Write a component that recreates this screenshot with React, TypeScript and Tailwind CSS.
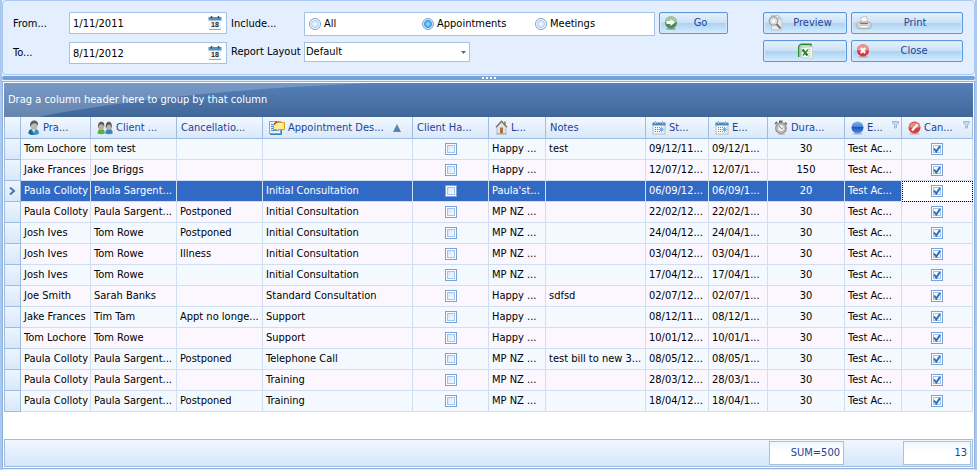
import React, { useState } from 'react';

interface Appointment {
  practitioner: string;
  client: string;
  reason: string;
  description: string;
  location: string;
  notes: string;
  start: string;
  end: string;
  duration: number;
}

const appointments: Appointment[] = [
  { practitioner: 'Tom Lochore', client: 'tom test', reason: '', description: '', location: 'Happy ...', notes: 'test', start: '09/12/11...', end: '09/12/1...', duration: 30 },
  { practitioner: 'Jake Frances', client: 'Joe Briggs', reason: '', description: '', location: 'Happy ...', notes: '', start: '12/07/12...', end: '12/07/1...', duration: 150 },
  { practitioner: 'Paula Colloty', client: 'Paula Sargent...', reason: '', description: 'Initial Consultation', location: "Paula'st...", notes: '', start: '06/09/12...', end: '06/09/1...', duration: 20 },
  { practitioner: 'Paula Colloty', client: 'Paula Sargent...', reason: 'Postponed', description: 'Initial Consultation', location: 'MP NZ ...', notes: '', start: '22/02/12...', end: '22/02/1...', duration: 30 },
  { practitioner: 'Josh Ives', client: 'Tom Rowe', reason: 'Postponed', description: 'Initial Consultation', location: 'MP NZ ...', notes: '', start: '24/04/12...', end: '24/04/1...', duration: 30 },
  { practitioner: 'Josh Ives', client: 'Tom Rowe', reason: 'Illness', description: 'Initial Consultation', location: 'MP NZ ...', notes: '', start: '03/04/12...', end: '03/04/1...', duration: 30 },
  { practitioner: 'Josh Ives', client: 'Tom Rowe', reason: '', description: 'Initial Consultation', location: 'MP NZ ...', notes: '', start: '17/04/12...', end: '17/04/1...', duration: 30 },
  { practitioner: 'Joe Smith', client: 'Sarah Banks', reason: '', description: 'Standard Consultation', location: 'Happy ...', notes: 'sdfsd', start: '02/07/12...', end: '02/07/1...', duration: 30 },
  { practitioner: 'Jake Frances', client: 'Tim Tam', reason: 'Appt no longe...', description: 'Support', location: 'Happy ...', notes: '', start: '08/12/11...', end: '08/12/1...', duration: 30 },
  { practitioner: 'Tom Lochore', client: 'Tom Rowe', reason: '', description: 'Support', location: 'Happy ...', notes: '', start: '10/01/12...', end: '10/01/1...', duration: 30 },
  { practitioner: 'Paula Colloty', client: 'Paula Sargent...', reason: 'Postponed', description: 'Telephone Call', location: 'MP NZ ...', notes: 'test bill to new 3...', start: '08/05/12...', end: '08/05/1...', duration: 30 },
  { practitioner: 'Paula Colloty', client: 'Paula Sargent...', reason: '', description: 'Training', location: 'MP NZ ...', notes: '', start: '28/03/12...', end: '28/03/1...', duration: 30 },
  { practitioner: 'Paula Colloty', client: 'Paula Sargent...', reason: 'Postponed', description: 'Training', location: 'MP NZ ...', notes: '', start: '18/04/12...', end: '18/04/1...', duration: 30 },
];

const PersonIcon = () => (
  <svg width="13" height="16" viewBox="0 0 13 16" className="shrink-0">
    <path d="M1.500 13.500C1.500 10.500 3 9.500 5 9h3.500c2.500.5 3.700 2 3.500 4.500C9 15.500 4 15.500 1.500 13.500z" fill="#3a95c4" />
    <path d="M1.500 13.500C1.500 11 2.500 10 4 9.300l2.500 5.500c-2 0-4-.5-5-1.300z" fill="#1f6391" />
    <path d="M4.500 9h4L7 12.500z" fill="#dcebf2" />
    <ellipse cx="7" cy="5.500" rx="3.500" ry="4.300" fill="#b9b9b7" />
    <path d="M3.500 7C2.300 3 4.300.5 7.200.5c2.800 0 4.500 2.200 3.500 5.500C10 4 9 3.500 7.700 3.200 6 3 4.300 4 3.500 7z" fill="#5c5d60" />
  </svg>
);

const PeopleIcon = () => (
  <svg width="16" height="14" viewBox="0 0 16 14" className="shrink-0">
    <path d="M.5 12.500c0-2.500 1-4 2.500-4.500h2.500c1.600.5 2.500 2 2.300 4.500-2 1-5.500 1-7.300 0z" fill="#5ab045" />
    <path d="M8.300 12.500c0-2.500 1-4 2.500-4.500h2.500c1.600.5 2.500 2 2.300 4.500-2 1-5.500 1-7.300 0z" fill="#3389b8" />
    <ellipse cx="4.200" cy="5.200" rx="2.800" ry="3.800" fill="#b9b0a4" />
    <ellipse cx="11.800" cy="5.200" rx="2.800" ry="3.800" fill="#b9b0a4" />
    <path d="M1.300 8C.5 3 2 .8 4.200.8 6.500.8 7.800 2.500 7.200 6 6.600 4 5.600 3.300 4 3.300S1.800 5 1.300 8z" fill="#57585a" />
    <path d="M8.900 8C8.200 3 9.600.8 11.800.8c2.300 0 3.600 2.200 2.900 7.200-.4-3-1.200-4.500-2.700-4.500S9.400 5 8.900 8z" fill="#57585a" />
  </svg>
);

const NoteIcon = () => (
  <svg width="16" height="16" viewBox="0 0 16 16" className="shrink-0">
    <rect x=".5" y="1.500" width="11" height="12" fill="#e8f2fc" stroke="#7ba8dc" />
    <path d="M12.500 8v6.500H1" fill="none" stroke="#4478b8" />
    <path d="M2 4.500h2M2 6.500h2M2 8.500h2M2 10.500h8" stroke="#4d8ad0" />
    <path d="M5 4.500L7 2.500h8.500V9.500H9.500L8 11 7.500 9.500H4.500V5z" fill="#ffec94" stroke="#d3a21c" />
    <path d="M5 4.500L8 1.500" stroke="#b8352b" strokeWidth="1.500" />
  </svg>
);

const HouseIcon = () => (
  <svg width="13" height="15" viewBox="0 0 13 15" className="shrink-0">
    <path d="M9 1.500h1.700V5H9z" fill="#8d8178" />
    <path d="M2 6.500l4.500-5 4.500 5v7H2z" fill="#e6e4e1" stroke="#b3afaa" strokeWidth=".7" />
    <path d="M1 7.200L6.500 1.200 12 7.200" fill="none" stroke="#79736d" strokeWidth="1.400" />
    <path d="M5 7.500h3v6H5z" fill="#a3714e" />
    <path d="M1 14h11" stroke="#a9a9a4" />
  </svg>
);

const DatesIcon = () => (
  <svg width="14" height="14" viewBox="0 0 14 14" className="shrink-0">
    <rect x="1" y="2.500" width="12" height="10.500" fill="#f8f9fb" stroke="#b7bec6" />
    <path d="M.5 1.500h13V4.500H.5z" fill="#4a8cc8" />
    <path d="M3.500 0v3M10.500 0v3" stroke="#9fb9cc" />
    <path d="M3 6.500h5M3 8.500h4M3 10.500h5" stroke="#b06a6a" strokeDasharray="1 1" />
    <path d="M9.500 5.500v6M6.500 8.500h6M7.500 6.500l4 4M11.500 6.500l-4 4" stroke="#66aee8" strokeWidth=".9" />
  </svg>
);

const StopwatchIcon = () => (
  <svg width="14" height="15" viewBox="0 0 14 15" className="shrink-0">
    <path d="M5 .5h3.500v2.500H5z" fill="#6b6b6b" />
    <path d="M1 4l2.200-2M12.800 4.500L10.800 2.500" stroke="#7a7a7a" strokeWidth="1.800" />
    <circle cx="7" cy="8.200" r="5.300" fill="#c9cac9" stroke="#8c8e8f" strokeWidth="1.200" />
    <circle cx="7" cy="8.200" r="3.600" fill="#f1f1ec" stroke="#a9aaa8" strokeWidth=".8" />
    <path d="M5 6l2.200 2.500L9 8" fill="none" stroke="#5c7f6e" strokeWidth=".9" />
    <path d="M4 14.300h7" stroke="#a8adb3" strokeWidth=".8" />
  </svg>
);

const BallIcon = () => (
  <svg width="13" height="14" viewBox="0 0 13 14" className="shrink-0">
    <defs>
      <linearGradient id="ball" x1="0" y1="0" x2="0" y2="1">
        <stop offset="0" stopColor="#8ab4ee" />
        <stop offset=".45" stopColor="#4a82d8" />
        <stop offset=".5" stopColor="#1c55bb" />
        <stop offset="1" stopColor="#4f95e8" />
      </linearGradient>
    </defs>
    <ellipse cx="6.500" cy="12.700" rx="5" ry="1" fill="#b3bfd0" />
    <circle cx="6.500" cy="6.500" r="6" fill="url(#ball)" />
  </svg>
);

const CancelIcon = () => (
  <svg width="13" height="14" viewBox="0 0 13 14" className="shrink-0">
    <ellipse cx="6.500" cy="12.700" rx="5" ry="1" fill="#cdb8bc" />
    <circle cx="6.500" cy="6.500" r="6" fill="#d8403f" />
    <path d="M.7 6a6 6 0 0 1 11.600 0C8.500 7.500 4.500 7.500.7 6z" fill="#ea8883" />
    <path d="M4 9.500L9.500 3.500" stroke="#fff" strokeWidth="2.200" />
  </svg>
);

const FunnelIcon = () => (
  <svg width="7" height="8" viewBox="0 0 7 8" className="mt-1 ml-auto shrink-0 self-start">
    <path d="M.5.500h6v1.500L4.500 4v3h-2V4L.5 2z" fill="#c5daf4" stroke="#9bb9e0" />
  </svg>
);

const CalendarIcon = () => (
  <svg width="14" height="14" viewBox="0 0 14 14">
    <path d="M.5 2h13v11H.5z" fill="#f3f3f3" />
    <path d="M1 13.500h12" stroke="#a5a5a5" />
    <path d="M.5 1h13v3.500H.5z" fill="#5b93bd" />
    <path d="M3.500 0v2.500M10.500 0v2.500" stroke="#2c526e" strokeWidth="1.500" />
    <text x="7" y="11" textAnchor="middle" fontSize="7" fontWeight="bold" fontFamily="Liberation Sans, sans-serif" fill="#222">18</text>
  </svg>
);

const GoIcon = () => (
  <svg width="14" height="14" viewBox="0 0 14 14">
    <ellipse cx="7" cy="12.700" rx="5" ry="1" fill="#8ba792" />
    <circle cx="7" cy="6.500" r="6" fill="#4b8a50" />
    <path d="M1 6a6 6 0 0 1 12 0C9 7.500 5 7.500 1 6z" fill="#a3c4a4" />
    <path d="M2.500 5h4V3l4.500 3.500L6.500 10V8h-4z" fill="#fff" />
  </svg>
);

const PreviewIcon = () => (
  <svg width="15" height="16" viewBox="0 0 15 16">
    <path d="M3.500.500h7l3.500 3.500v11H3.500z" fill="#e9ebed" stroke="#bfc3c7" />
    <path d="M10.500.500v3.500H14" fill="#d0d4d8" stroke="#bfc3c7" />
    <circle cx="5.500" cy="6" r="4.200" fill="#e3e9ed" stroke="#a3a6aa" strokeWidth="1.400" />
    <circle cx="5.500" cy="6" r="2.700" fill="#f3f6f8" stroke="#c3c7ca" strokeWidth=".7" />
    <path d="M8.500 9l4 4.500" stroke="#75787c" strokeWidth="2" />
  </svg>
);

const PrinterIcon = () => (
  <svg width="16" height="14" viewBox="0 0 16 14">
    <path d="M4.500 1.500l6-1 1 5.500h-6z" fill="#fafafa" stroke="#c3c3c3" />
    <path d="M1 7.500L3 6h10l2 1.500V11l-1 1.500H2L1 11z" fill="#dcdcdc" stroke="#a0a0a0" strokeWidth=".8" />
    <path d="M4 7.500h8" stroke="#777" strokeWidth="1.200" />
    <path d="M3.500 9.500h9v2.500h-9z" fill="#f9f9f9" stroke="#b0b0b0" strokeWidth=".6" />
  </svg>
);

const ExcelIcon = () => (
  <svg width="16" height="16" viewBox="0 0 16 16">
    <path d="M1.700 14V4.500C1.700 2.700 3 1.200 5 1.200h9v2" fill="none" stroke="#2f8a34" strokeWidth="1.400" />
    <path d="M3.200 13.500V5C3.200 3.700 4 2.800 5.500 2.800H13" fill="none" stroke="#9ccb9c" />
    <path d="M4.500 4.500l11-.5v11.500L4.500 14z" fill="#fbfdfb" stroke="#b9c7b9" strokeWidth=".7" />
    <path d="M12.500 5.500v8.500" stroke="#c9dfc9" strokeWidth="3" />
    <path d="M11 7.500h4M11 9.500h4M11 11.500h4" stroke="#fff" strokeWidth=".8" />
    <path d="M5.500 6.500l5 6" stroke="#217a26" strokeWidth="2.200" />
    <path d="M11 6.500l-5 6" stroke="#2f8a34" strokeWidth="1.400" />
  </svg>
);

const CloseIcon = () => (
  <svg width="14" height="14" viewBox="0 0 14 14">
    <ellipse cx="7" cy="12.700" rx="5" ry="1" fill="#c9a9b0" />
    <circle cx="7" cy="6.500" r="6" fill="#d4383c" />
    <path d="M1 6a6 6 0 0 1 12 0C9 7.500 5 7.500 1 6z" fill="#ea9393" />
    <path d="M4.800 4l4.400 5M9.200 4L4.800 9" stroke="#fff" strokeWidth="2.200" />
  </svg>
);

const columns = [
  { label: 'Pra...', icon: <PersonIcon /> },
  { label: 'Client ...', icon: <PeopleIcon /> },
  { label: 'Cancellatio...' },
  { label: 'Appointment Des...', icon: <NoteIcon />, sorted: true },
  { label: 'Client Ha...' },
  { label: 'L...', icon: <HouseIcon /> },
  { label: 'Notes' },
  { label: 'St...', icon: <DatesIcon /> },
  { label: 'E...', icon: <DatesIcon /> },
  { label: 'Dura...', icon: <StopwatchIcon /> },
  { label: 'E...', icon: <BallIcon />, filtered: true },
  { label: 'Can...', icon: <CancelIcon />, filtered: true },
];

function DateField({ id, value }: { id: string; value: string }) {
  return (
    <div className="flex h-[22px] w-[158px] items-center border border-[#a6c1e4] bg-white pr-1">
      <input id={id} type="text" defaultValue={value} className="h-full min-w-0 flex-1 px-[3px] outline-none" />
      <button type="button" aria-label="Open calendar">
        <CalendarIcon />
      </button>
    </div>
  );
}

function Radio({ label, checked, onSelect }: { label: string; checked: boolean; onSelect: () => void }) {
  return (
    <label className="flex items-center gap-[3px]">
      <input
        type="radio"
        name="include"
        checked={checked}
        onChange={onSelect}
        className="size-3 appearance-none rounded-full border border-[#7ba3d6] bg-[radial-gradient(circle,#f2f8ff_0%,#dbe9fb_35%,#a9c8ef_48%,#f4f9ff_60%)] checked:bg-[radial-gradient(circle,#a5e8ff_0%,#4fb4f0_35%,#3a8fd6_48%,#cfe6fc_62%)]"
      />
      {label}
    </label>
  );
}

function Check({ checked, label }: { checked?: boolean; label: string }) {
  return (
    <label className="mx-auto grid size-3">
      <input
        type="checkbox"
        aria-label={label}
        defaultChecked={checked}
        className="peer col-start-1 row-start-1 size-3 appearance-none border border-[#76a3dc] bg-linear-to-br from-[#cfe0f6] to-white shadow-[inset_0_0_0_1px_#fff,inset_0_0_0_2px_#a5c3e8] checked:from-white checked:to-[#e8f1fc]"
      />
      <svg viewBox="0 0 12 12" className="pointer-events-none col-start-1 row-start-1 hidden size-3 peer-checked:block">
        <path d="M3 5.500l2.300 3L9 3" fill="none" stroke="#2f6fb8" strokeWidth="2" />
      </svg>
    </label>
  );
}

function ToolButton({ icon, label, name }: { icon: React.ReactNode; label?: string; name?: string }) {
  return (
    <button
      type="button"
      aria-label={name}
      className="flex h-[22px] w-full items-center rounded-xs border border-[#5c97de] bg-[linear-gradient(#e6f1fd,#cbe1f6_50%,#acd1f3_50%,#d0edff)] px-1 text-[#1c4494] shadow-[inset_0_0_0_1px_#d5e8fb]"
    >
      {label ? icon : <span className="mx-auto">{icon}</span>}
      {label && <span className="flex-1 text-center">{label}</span>}
    </button>
  );
}

export default function App() {
  const [include, setInclude] = useState('Appointments');
  const [selected, setSelected] = useState(2);

  const total = appointments.reduce((sum, a) => sum + a.duration, 0);

  return (
    <div className="border-x-2 border-[#a9c7ef] bg-[#e3eeff] font-['DejaVu_Sans_Condensed','DejaVu_Sans',sans-serif] text-[11px] leading-4 text-black">
      <form className="flex h-[75px] items-start rounded-sm border border-[#a9c8f3] pt-[11px] pr-[11px] pl-2.5">
        <div className="grid grid-cols-[56px_158px_77px_auto] gap-y-1.5">
          <label htmlFor="from" className="self-center">From...</label>
          <DateField id="from" value="1/11/2011" />
          <span id="include-label" className="self-center pl-1">Include...</span>
          <div className="flex items-start gap-1">
            <div role="radiogroup" aria-labelledby="include-label" className="grid h-6 w-[351px] grid-cols-3 items-center border border-[#a6c1e4] bg-white pr-1.5 pl-1">
              {['All', 'Appointments', 'Meetings'].map((option) => (
                <Radio key={option} label={option} checked={include === option} onSelect={() => setInclude(option)} />
              ))}
            </div>
            <div className="w-[69px]">
              <ToolButton icon={<GoIcon />} label="Go" />
            </div>
          </div>

          <label htmlFor="to" className="self-center">To...</label>
          <DateField id="to" value="8/11/2012" />
          <label htmlFor="layout" className="pt-0.5 pl-1 whitespace-nowrap">Report Layout</label>
          <div className="grid w-[166px] items-center self-start">
            <select id="layout" className="col-start-1 row-start-1 h-5 appearance-none border border-[#a6c1e4] bg-white px-px">
              <option>Default</option>
            </select>
            <svg width="5" height="3" viewBox="0 0 5 3" className="pointer-events-none col-start-1 row-start-1 mr-1 justify-self-end">
              <path d="M0 0h5L2.500 3z" fill="#3b6fb0" />
            </svg>
          </div>
        </div>

        <div className="ml-auto grid grid-cols-[84px_112px] gap-x-1 gap-y-1.5">
          <ToolButton icon={<PreviewIcon />} label="Preview" />
          <ToolButton icon={<PrinterIcon />} label="Print" />
          <ToolButton icon={<ExcelIcon />} name="Export to Excel" />
          <ToolButton icon={<CloseIcon />} label="Close" />
        </div>
      </form>

      <div className="my-px flex h-1 items-center justify-center gap-0.5 rounded-xs bg-[#75a1db]">
        <i className="size-0.5 bg-white" />
        <i className="size-0.5 bg-white" />
        <i className="size-0.5 bg-white" />
        <i className="size-0.5 bg-white" />
      </div>

      <div className="border border-[#8fb0dc] bg-white p-px">
        <div className="relative flex h-[34px] items-center overflow-hidden bg-linear-to-b from-[#5580b8] to-[#416799] px-1 text-white">
          <svg viewBox="0 0 400 34" preserveAspectRatio="none" className="absolute inset-y-0 left-0 h-full w-[400px]">
            <path d="M0 0h370C260 4 130 15 35 34H0z" fill="#fff" fillOpacity=".2" />
          </svg>
          <span className="relative">Drag a column header here to group by that column</span>
        </div>

        <table className="w-full table-fixed border-separate border-spacing-0">
          <colgroup>
            <col className="w-[17px]" />
            <col className="w-[70px]" />
            <col className="w-[86px]" />
            <col className="w-[86px]" />
            <col className="w-[150px]" />
            <col className="w-[76px]" />
            <col className="w-[57px]" />
            <col className="w-[100px]" />
            <col className="w-[63px]" />
            <col className="w-[59px]" />
            <col className="w-[77px]" />
            <col className="w-[57px]" />
            <col className="w-[71px]" />
          </colgroup>
          <thead className="text-[#1c4494]">
            <tr className="h-[22px] bg-linear-to-b from-[#f2f8ff] to-[#d8e8fa]">
              <th className="border-x border-b border-[#9ebce0]" aria-label="Row" />
              {columns.map((col, i) => (
                <th key={i} className="border-r border-b border-[#9ebce0] p-0 font-normal whitespace-nowrap">
                  <div className={`flex h-[21px] items-center ${col.icon ? 'gap-[3px] pr-0.5 pl-1.5' : 'px-1'}`}>
                    {col.icon}
                    <span>{col.label}</span>
                    {col.sorted && (
                      <svg width="8" height="8" viewBox="0 0 8 8" className="ml-1.5">
                        <path d="M4 0l4 8H0z" fill="#5c82b5" />
                      </svg>
                    )}
                    {col.filtered && <FunnelIcon />}
                  </div>
                </th>
              ))}
            </tr>
          </thead>
          <tbody className="[&_td]:border-r [&_td]:border-b [&_td]:border-[#cfdff0] [&_td]:px-[3px] [&_td]:py-0 [&_td]:whitespace-nowrap">
            {appointments.map((a, i) => (
              <tr
                key={i}
                onClick={() => setSelected(i)}
                className={`h-[21px] ${i === selected ? 'bg-[#316ac5] text-white' : 'odd:bg-[#f4f9ff] even:bg-[#fcf7ff]'}`}
              >
                <th className="border-x border-b border-[#9ebce0] bg-linear-to-b from-[#edf5ff] to-[#d8e8fa] p-0">
                  {i === selected && (
                    <svg width="7" height="8" viewBox="0 0 7 8" className="mx-auto">
                      <path d="M1 .500L5 4 1 7.500" fill="none" stroke="#4a76ad" strokeWidth="2" />
                    </svg>
                  )}
                </th>
                <td>{a.practitioner}</td>
                <td>{a.client}</td>
                <td>{a.reason}</td>
                <td>{a.description}</td>
                <td><Check label="Client has arrived" /></td>
                <td>{a.location}</td>
                <td>{a.notes}</td>
                <td>{a.start}</td>
                <td>{a.end}</td>
                <td className="text-center">{a.duration}</td>
                <td>Test Ac...</td>
                <td className={i === selected ? 'bg-white outline-1 -outline-offset-1 outline-black outline-dotted' : ''}>
                  <Check label="Cancelled" checked />
                </td>
              </tr>
            ))}
          </tbody>
        </table>

        <div className="mt-[27px] flex h-7 items-center justify-end gap-[59px] border border-[#9ebce0] bg-linear-to-b from-[#f0f7ff] to-[#d6e6f9] pr-px text-[#1c4494]">
          <output className="flex h-6 w-[75px] items-center justify-end border border-[#a9c1e0] bg-linear-to-b from-[#f0f5fc] to-white to-40% px-[3px]">SUM={total}</output>
          <output className="flex h-6 w-[68px] items-center justify-end border border-[#a9c1e0] bg-linear-to-b from-[#f0f5fc] to-white to-40% px-[3px]">{appointments.length}</output>
        </div>
      </div>
      <div className="h-[2px]" />
    </div>
  );
}
